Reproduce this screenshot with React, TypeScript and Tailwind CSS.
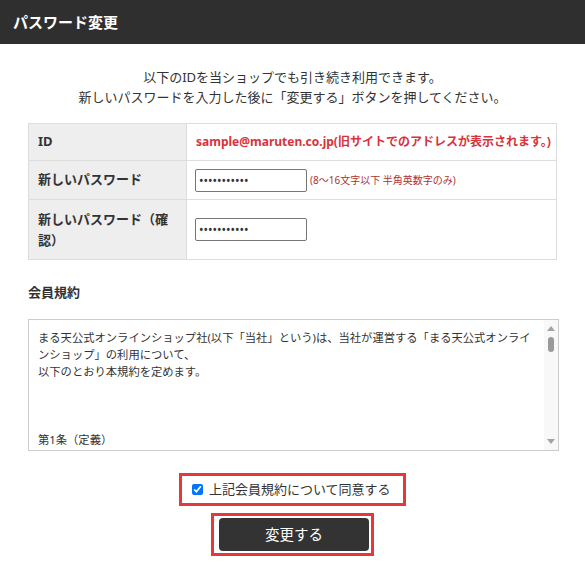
import React from 'react';

const terms =
  'まる天公式オンラインショップ社(以下「当社」という)は、当社が運営する「まる天公式オンラインショップ」の利用について、\n以下のとおり本規約を定めます。\n\n\n\n第1条（定義）';

const ScrollArrow = ({ up }: { up?: boolean }) => (
  <svg width="8" height="5" viewBox="0 0 8 5">
    <polygon points={up ? '0,5 4,0 8,5' : '0,0 4,5 8,0'} fill="#a3a3a3" />
  </svg>
);

export default function App() {
  return (
    <div className="w-[585px] min-h-[585px] bg-white text-[#333] font-['Noto_Sans','Noto_Sans_CJK_JP',sans-serif]">
      <header className="h-[44px] bg-[#2f2f2f] flex items-center px-[13px]">
        <h1 className="text-white text-[15px] font-bold">パスワード変更</h1>
      </header>

      <div className="px-[28px]">
        <p className="pt-[23px] text-center text-[13px] leading-[20px]">
          以下のIDを当ショップでも引き続き利用できます。
          <br />
          新しいパスワードを入力した後に「変更する」ボタンを押してください。
        </p>

        <table className="mt-[16px] w-full table-fixed border-collapse text-[13px]">
          <colgroup>
            <col className="w-[158px]" />
            <col />
          </colgroup>
          <tbody>
            <tr className="h-[37px]">
              <th className="bg-[#eeeeee] border border-[#dddddd] text-left font-bold px-[9px]">ID</th>
              <td className="border border-[#dddddd] pl-[9px] text-[12px] font-bold text-[#d9323b] whitespace-nowrap">
                sample@maruten.co.jp(旧サイトでのアドレスが表示されます。)
              </td>
            </tr>
            <tr className="h-[39px]">
              <th className="bg-[#eeeeee] border border-[#dddddd] text-left font-bold px-[9px]">新しいパスワード</th>
              <td className="border border-[#dddddd] pl-[8px]">
                <div className="flex items-center">
                  <input
                    type="password"
                    readOnly
                    defaultValue="abcdefghijk"
                    className="w-[112px] h-[23px] border border-[#767676] rounded-[2px] px-[3px] text-[12px] outline-none"
                  />
                  <span className="ml-[3px] text-[10px] text-[#b03232]">(8～16文字以下 半角英数字のみ)</span>
                </div>
              </td>
            </tr>
            <tr className="h-[60px]">
              <th className="bg-[#eeeeee] border border-[#dddddd] text-left font-bold px-[9px] leading-[21px]">
                新しいパスワード（確認）
              </th>
              <td className="border border-[#dddddd] pl-[8px]">
                <input
                  type="password"
                  readOnly
                  defaultValue="abcdefghijk"
                  className="block w-[112px] h-[23px] border border-[#767676] rounded-[2px] px-[3px] text-[12px] outline-none"
                />
              </td>
            </tr>
          </tbody>
        </table>

        <h2 className="mt-[22px] text-[13px] font-bold leading-[20px]">会員規約</h2>

        <div className="mt-[17px] w-[531px] h-[132px] border border-[#cccccc] flex">
          <div className="flex-1 overflow-hidden pl-[9px] pr-[11px] pt-[9px] text-[11.3px] leading-[17px] whitespace-pre-wrap">
            {terms}
          </div>
          <div className="w-[14px] bg-[#f8f8f8] flex flex-col items-center justify-between py-[6px]">
            <div className="flex flex-col items-center gap-[6px]">
              <ScrollArrow up />
              <div className="w-[6px] h-[15px] rounded-full bg-[#9a9a9a]" />
            </div>
            <ScrollArrow />
          </div>
        </div>

        <div className="mt-[22px] flex justify-center">
          <label className="w-[227px] h-[33px] border-[3px] border-[#e5383b] flex items-center pl-[10px] gap-[6px] text-[13px]">
            <input type="checkbox" defaultChecked className="w-[11px] h-[11px] m-0" />
            上記会員規約について同意する
          </label>
        </div>

        <div className="mt-[7px] flex justify-center">
          <div className="border-[3px] border-[#e5383b] pl-[5px] pr-[2px] py-[2px]">
            <button className="w-[150px] h-[33px] bg-[#333333] rounded-[4px] text-white text-[14.5px]">
              変更する
            </button>
          </div>
        </div>
      </div>
    </div>
  );
}
